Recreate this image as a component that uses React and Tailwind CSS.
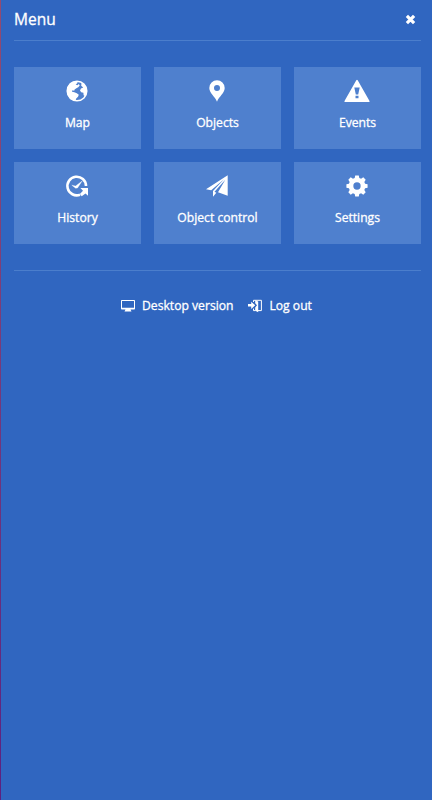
const svgProps = { fill: 'currentColor', xmlns: 'http://www.w3.org/2000/svg' };

const MapIcon = () => (
  <svg {...svgProps} className="h-[22px] w-[22px]" viewBox="0 0 22 22">
    <circle cx="11" cy="11" r="9.8" fill="none" stroke="currentColor" strokeWidth="1.5" />
    <path d="M10 1 11.8 2.8 9.7 4.6 11.4 5.2 12.8 4 13.7 5.6 12.2 7.2 10.4 8.3 8.6 9.4 8.2 10.8 6.4 10.3 6 11.8 8.4 12.2 10.8 13.2 12.8 14.7 12 16.7 10.2 18.4 9.4 20.9 4.2 19.2 1.2 13.8 1 8 4.2 3Z" />
    <path d="M15.6 2.4 19 5 21 10 20.6 13.6 19 16 17.6 15.2 17.4 12.8 15.2 12.2 14 10.4 15 8.4 17.2 7.6 15.2 5.8Z" />
  </svg>
);

const PinIcon = () => (
  <svg {...svgProps} className="h-[22px] w-[16px]" viewBox="0 0 16 22">
    <path fillRule="evenodd" d="M8 .3A7.7 7.7 0 0 0 .3 8C.3 13.2 6 16.5 8 21.7 10 16.5 15.7 13.2 15.7 8A7.7 7.7 0 0 0 8 .3Zm0 4.7a3 3 0 1 1 0 6 3 3 0 0 1 0-6Z" />
  </svg>
);

const EventsIcon = () => (
  <svg {...svgProps} className="h-[24px] w-[26px]" viewBox="0 0 26 24">
    <path fillRule="evenodd" d="M12.3 1.3Q13 .3 13.7 1.3L25.5 22Q26 23 25 23H1Q0 23 .5 22ZM10.3 8.5 11.8 15.5H14.2L15.7 8.5ZM11.5 16.7V19.3H14.5V16.7Z" />
  </svg>
);

const HistoryIcon = () => (
  <svg {...svgProps} className="h-[24px] w-[24px]" viewBox="0 0 24 24">
    <path d="M21 12A9.3 9.3 0 1 0 15 20.7" fill="none" stroke="currentColor" strokeWidth="2.6" />
    <path d="M15.4 14H23V21.8L20.5 19.5 16.7 22.3 14.9 20 18 16.8Z" />
    <path d="M6.8 11.2 10.6 12 17.2 7 12.5 14 10.6 14.2Z" stroke="currentColor" strokeWidth=".3" />
  </svg>
);

const PlaneIcon = () => (
  <svg {...svgProps} className="h-[22px] w-[22px]" viewBox="0 0 22 22">
    <path d="M21.7.3 0 14.2 5.2 15.2 18 4.2 7 16V21.7L10.3 17.8 8.5 16.7 19.3 4.7 12 17.2 21.7 20.8Z" />
  </svg>
);

const SettingsIcon = () => (
  <svg {...svgProps} className="h-[22px] w-[22px]" viewBox="0 0 21 21">
    <path fillRule="evenodd" d="M8.8.4H12.2L12.7 2.8 14.4 3.5 16.5 2.2 18.8 4.5 17.5 6.6 18.2 8.3 20.6 8.8V12.2L18.2 12.7 17.5 14.4 18.8 16.5 16.5 18.8 14.4 17.5 12.7 18.2 12.2 20.6H8.8L8.3 18.2 6.6 17.5 4.5 18.8 2.2 16.5 3.5 14.4 2.8 12.7.4 12.2V8.8L2.8 8.3 3.5 6.6 2.2 4.5 4.5 2.2 6.6 3.5 8.3 2.8ZM10.5 7a3.5 3.5 0 1 0 0 7 3.5 3.5 0 0 0 0-7Z" />
  </svg>
);

const DesktopIcon = () => (
  <svg {...svgProps} className="h-[12px] w-[14px]" viewBox="0 0 14 12">
    <path fillRule="evenodd" d="M.8 0H13.2Q14 0 14 .8V8.7Q14 9.5 13.2 9.5H9.5L10.5 11.5H3.5L4.5 9.5H.8Q0 9.5 0 8.7V.8Q0 0 .8 0ZM1 1V7.8H13V1Z" />
  </svg>
);

const LogoutIcon = () => (
  <svg {...svgProps} className="h-[14px] w-[14px]" viewBox="0 0 14 14">
    <path d="M0 5H3.2V2.7L7.2 6.3 3.2 9.9V7.6H0Z" />
    <path d="M5.5 3V1.3H13.4V11.6H10M5.5 9.6V11.6H7.5" fill="none" stroke="currentColor" strokeWidth="1" />
    <path d="M7.2 1.2 10.2 2.6V13.2L7.2 11.8V8.4L9 6.3 7.2 4.3Z" />
  </svg>
);

const items = [
  { label: 'Map', Icon: MapIcon },
  { label: 'Objects', Icon: PinIcon },
  { label: 'Events', Icon: EventsIcon },
  { label: 'History', Icon: HistoryIcon },
  { label: 'Object control', Icon: PlaneIcon },
  { label: 'Settings', Icon: SettingsIcon },
];

export default function App() {
  return (
    <div className="flex h-[800px] w-full bg-[#3066c0] font-['Open_Sans','Noto_Sans',sans-serif] text-white [-webkit-text-stroke:0.3px_white]">
      <div className="w-px shrink-0 bg-linear-to-b from-[#944b70] to-[#5c2080]" />
      <main className="min-w-0 flex-1 pr-[11px] pl-[13px]">
        <header className="flex h-[41px] items-center justify-between border-b border-[#4b7ecc] pr-[5px]">
          <h1 className="mt-[-2px] text-[15.5px] leading-[22px] font-normal">Menu</h1>
          <button aria-label="Close" className="mt-[-2px]">
            <svg {...svgProps} className="h-[11px] w-[11px]" viewBox="0 0 11 11">
              <path d="M1.9 1.9 9.1 9.1M9.1 1.9 1.9 9.1" stroke="currentColor" strokeWidth="3.2" />
            </svg>
          </button>
        </header>
        <nav className="grid grid-cols-3 gap-[13px] pt-[26px] pb-[26px]">
          {items.map(({ label, Icon }) => (
            <button key={label} className="flex h-[82px] flex-col items-center bg-[#4f80ce] pt-[11px]">
              <span className="mr-px flex h-[26px] items-center justify-center"><Icon /></span>
              <span className="mt-[10px] text-[12.15px] leading-[18px]">{label}</span>
            </button>
          ))}
        </nav>
        <footer className="flex justify-center gap-[15px] border-t border-[#4b7ecc] pt-[26px] pr-[2px] text-[12.15px] leading-[18px]">
          <button className="flex items-center gap-[7px]"><DesktopIcon /><span>Desktop version</span></button>
          <button className="flex items-center gap-[7px]"><LogoutIcon /><span>Log out</span></button>
        </footer>
      </main>
    </div>
  );
}
